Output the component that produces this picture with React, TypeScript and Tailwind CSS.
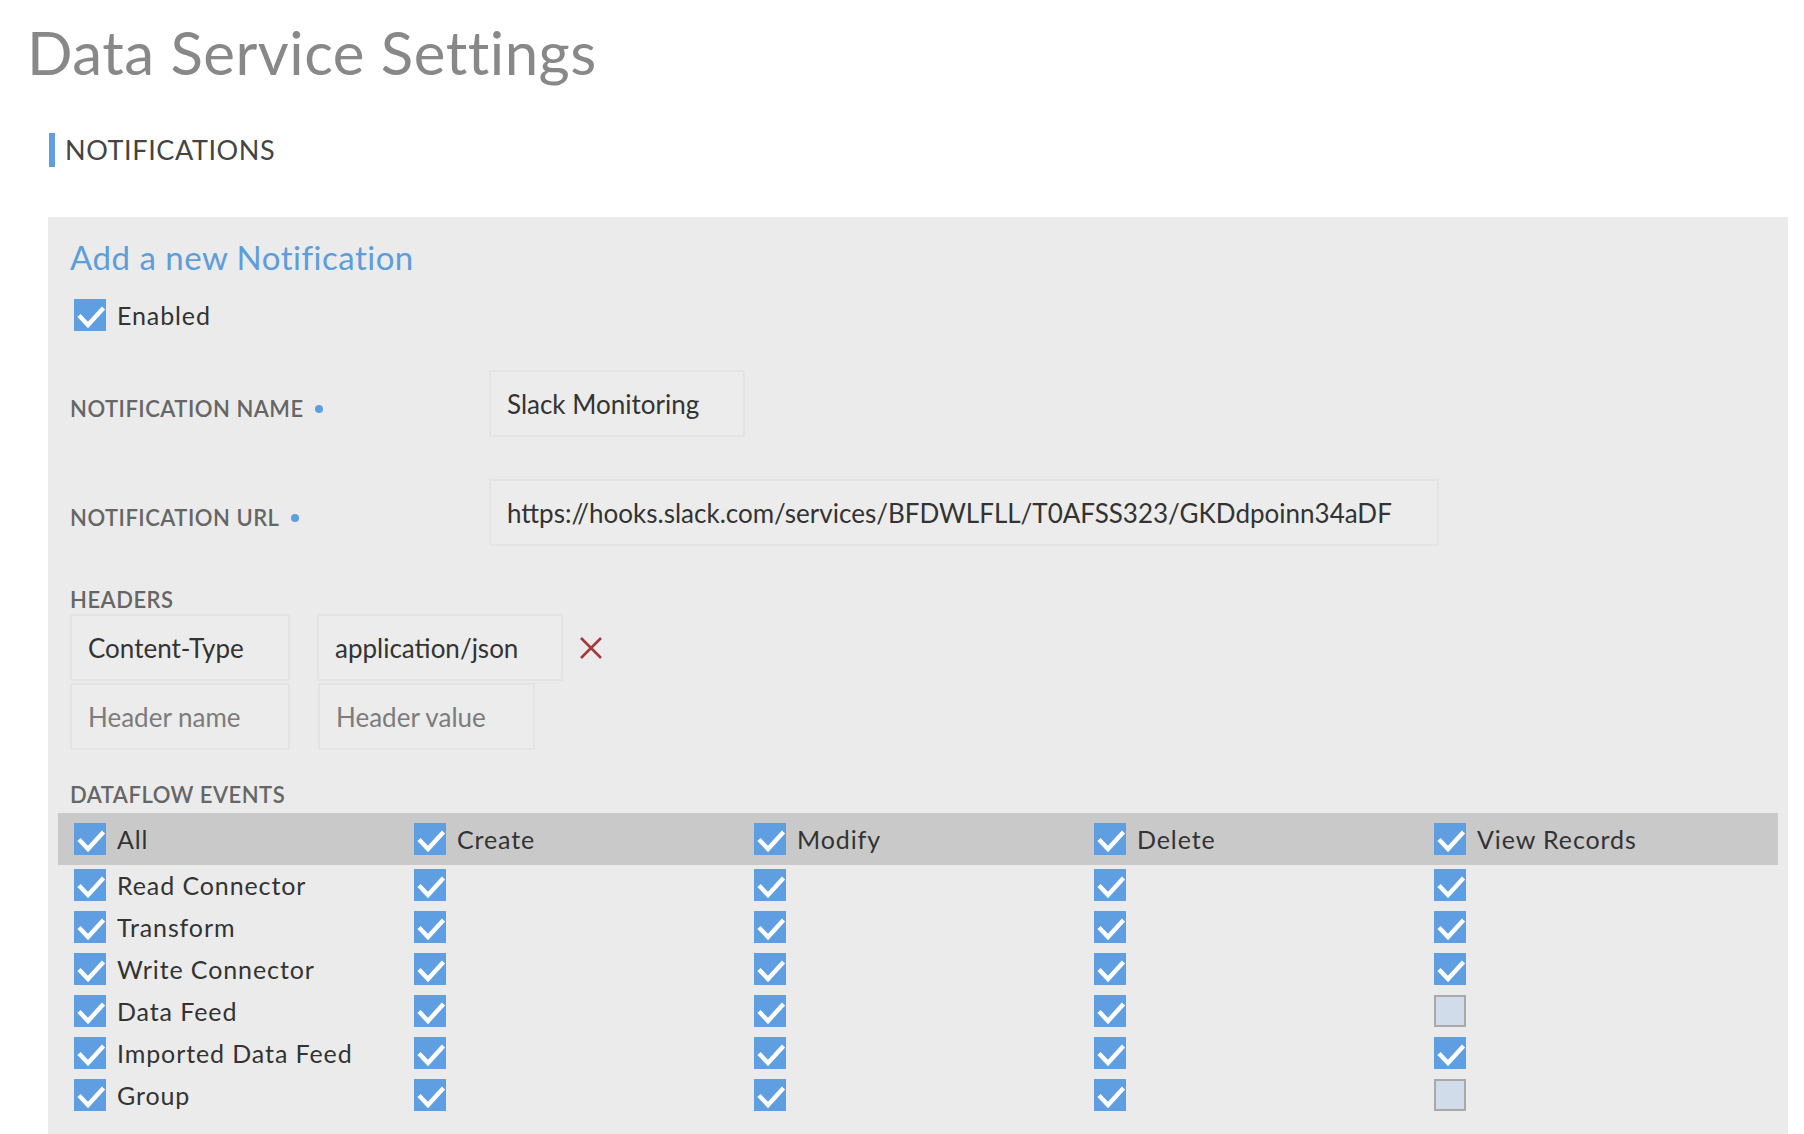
import React from 'react'

type EventRow = {
  name: string
  checks: boolean[]
}

const rows: EventRow[] = [
  { name: 'Read Connector', checks: [true, true, true, true, true] },
  { name: 'Transform', checks: [true, true, true, true, true] },
  { name: 'Write Connector', checks: [true, true, true, true, true] },
  { name: 'Data Feed', checks: [true, true, true, true, false] },
  { name: 'Imported Data Feed', checks: [true, true, true, true, true] },
  { name: 'Group', checks: [true, true, true, true, false] },
]

const columns = ['All', 'Create', 'Modify', 'Delete', 'View Records']

function Checkbox({ checked }: { checked: boolean }) {
  if (!checked) {
    return <span className="block w-8 h-8 shrink-0 bg-[#d1dcea] border-2 border-[#a9a9a9]" />
  }
  return (
    <span className="flex w-8 h-8 shrink-0 bg-[#5f9ee0]">
      <svg viewBox="0 0 32 32" className="w-8 h-8" fill="none">
        <path d="M5 16.5l9 9.5 15.5-17" stroke="white" strokeWidth="4.4" strokeLinecap="butt" strokeLinejoin="miter" />
      </svg>
    </span>
  )
}

function FieldLabel({ children, required }: { children: React.ReactNode; required?: boolean }) {
  return (
    <div className="flex items-center gap-[11px] text-[22px] leading-[20px] font-semibold text-[#666] tracking-[0.5px]">
      <span>{children}</span>
      {required && <span className="block w-[8px] h-[8px] rounded-full bg-[#5f9ee0]" />}
    </div>
  )
}

function TextBox({ value, placeholder, width }: { value?: string; placeholder?: string; width: string }) {
  return (
    <input
      readOnly
      defaultValue={value}
      placeholder={placeholder}
      className={`${width} h-[67px] px-[16px] bg-[#ececec] border-2 border-[#e4e4e4] text-[26px] text-[#333] placeholder:text-[#7c7c7c] outline-none`}
    />
  )
}

function Label({ children }: { children: React.ReactNode }) {
  return <span className="text-[25px] leading-8 tracking-[0.9px] text-[#333]">{children}</span>
}

export default function App() {
  return (
    <div className="min-h-screen bg-white font-['Lato','Open_Sans',sans-serif] overflow-hidden">
      <h1 className="ml-[27px] mt-[22px] text-[60px] leading-[60px] tracking-[0.5px] text-[#888] font-normal">
        Data Service Settings
      </h1>

      <div className="ml-[49px] mt-[51px] flex items-center h-[34px] border-l-[6px] border-[#5f9ee0] pl-[10px]">
        <span className="text-[27px] text-[#444] tracking-[0.6px]">NOTIFICATIONS</span>
      </div>

      {/* Notification form */}
      <div className="ml-[48px] mr-[16px] mt-[50px] bg-[#ebebeb] pl-[22px] pr-[10px] pt-[24px] pb-[40px]">
        <h2 className="text-[33px] leading-[32px] tracking-[0.5px] text-[#5d9ddb]">Add a new Notification</h2>

        <div className="mt-[26px] ml-[4px] flex items-center h-8 gap-[11px]">
          <Checkbox checked />
          <Label>Enabled</Label>
        </div>

        <div className="mt-[39px] flex items-center">
          <div className="w-[419px] pt-[10px]">
            <FieldLabel required>NOTIFICATION NAME</FieldLabel>
          </div>
          <TextBox value="Slack Monitoring" width="w-[256px]" />
        </div>

        <div className="mt-[42px] flex items-center">
          <div className="w-[419px] pt-[10px]">
            <FieldLabel required>NOTIFICATION URL</FieldLabel>
          </div>
          <TextBox value="https://hooks.slack.com/services/BFDWLFLL/T0AFSS323/GKDdpoinn34aDF" width="w-[950px]" />
        </div>

        <div className="mt-[44px]">
          <FieldLabel>HEADERS</FieldLabel>
        </div>
        <div className="mt-[4px] flex flex-col gap-[2px]">
          <div className="flex items-center gap-[27px]">
            <TextBox value="Content-Type" width="w-[220px]" />
            <div className="flex items-center gap-[16px]">
              <TextBox value="application/json" width="w-[246px]" />
              <svg viewBox="0 0 24 24" className="w-[24px] h-[24px]" fill="none">
                <path d="M2 2l20 20M22 2L2 22" stroke="#a33a3a" strokeWidth="2.6" />
              </svg>
            </div>
          </div>
          <div className="flex items-center gap-[28px]">
            <TextBox placeholder="Header name" width="w-[220px]" />
            <TextBox placeholder="Header value" width="w-[217px]" />
          </div>
        </div>

        <div className="mt-[35px]">
          <FieldLabel>DATAFLOW EVENTS</FieldLabel>
        </div>

        {/* Events table */}
        <div className="mt-[8px] -ml-[12px]">
          <div className="grid grid-cols-[340px_340px_340px_340px_1fr] h-[52px] items-center bg-[#c9c9c9]">
            {columns.map((c) => (
              <div key={c} className="flex items-center gap-[11px] pl-[16px]">
                <Checkbox checked />
                <Label>{c}</Label>
              </div>
            ))}
          </div>
          <div className="pt-[4px] flex flex-col gap-[10px]">
            {rows.map((r) => (
              <div key={r.name} className="grid grid-cols-[340px_340px_340px_340px_1fr] h-8 items-center">
                {r.checks.map((v, i) => (
                  <div key={i} className="flex items-center gap-[11px] pl-[16px]">
                    <Checkbox checked={v} />
                    {i === 0 && <Label>{r.name}</Label>}
                  </div>
                ))}
              </div>
            ))}
          </div>
        </div>
      </div>
    </div>
  )
}
